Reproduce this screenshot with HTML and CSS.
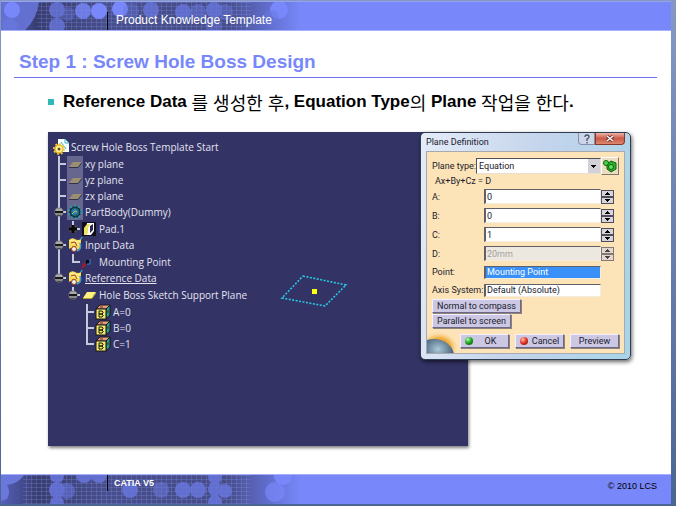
FILE: index.html
```html
<!DOCTYPE html>
<html lang="ko">
<head>
    <meta charset="UTF-8">
    <meta name="viewport" content="width=device-width, initial-scale=1.0">
    <title>Product Knowledge Template</title>
    <link rel="stylesheet" href="styles.css">
</head>
<body>
    <!-- shared icon shapes -->
    <svg class="defs" width="0" height="0" aria-hidden="true">
        <defs>
            <linearGradient id="fade" x1="0" y1="0" x2="1" y2="0">
                <stop offset="0" stop-color="#5560b8"/>
                <stop offset="0.12" stop-color="#383d70"/>
                <stop offset="0.35" stop-color="#474e8c"/>
                <stop offset="0.75" stop-color="#454c88"/>
                <stop offset="0.88" stop-color="#5f6bc8"/>
                <stop offset="1" stop-color="#7888fa"/>
            </linearGradient>
            <pattern id="mesh" width="5" height="4" patternUnits="userSpaceOnUse">
                <path d="M0 .5H5M.5 0V4" stroke="#8c98e8" stroke-opacity=".25" fill="none"/>
            </pattern>
            <symbol id="i-plane" viewBox="0 0 16 16">
                <rect width="16" height="16" fill="#66668f"/>
                <path d="M2 11L6 6H15L11 11Z" fill="#9a9070"/>
                <path d="M2 11.5H11L15 6.5" stroke="#303050" fill="none"/>
            </symbol>
            <symbol id="i-set" viewBox="0 0 16 16">
                <path d="M2 3Q5 0 8 2T14 2V11Q10 14 7 12T2 12Z" fill="#f8dc50"/>
                <path d="M3 4Q6 2 8 4T13 4M4 7Q7 5 12 8" stroke="#fff8c8" fill="none"/>
                <path d="M4 6L8 5 10 9M5 10H9" stroke="#b83018" fill="none"/>
                <path d="M10 14Q15 12 13 6M14 2L15 0" stroke="#38a0d8" stroke-width="1.5" fill="none"/>
                <circle cx="7" cy="12" r="2.5" fill="#f0f0f0" stroke="#a04020"/>
            </symbol>
            <symbol id="i-param" viewBox="0 0 16 16">
                <path d="M1 5L5 1H15L11 5Z" fill="#e0a080" stroke="#181818"/>
                <path d="M11 5L15 1V11L11 15Z" fill="#20a090" stroke="#181818"/>
                <rect x="1" y="5" width="10" height="10" fill="#f0e868" stroke="#181818"/>
                <path d="M4 7H7L8 8V9L7 10H4ZM4 10H7L8 11V12L7 13H4Z" fill="none" stroke="#181818"/>
                <path d="M5 3H8M13 6V9" stroke="#782010"/>
            </symbol>
            <symbol id="i-minus" viewBox="0 0 10 10">
                <circle cx="5" cy="5" r="4.5" fill="#8a8a8a"/>
                <path d="M2 8A4.5 4.5 0 0 0 8 8Z" fill="#444"/>
                <rect x="1" y="4" width="8" height="2" fill="#181818"/>
                <path d="M2 3H8" stroke="#c8c8c8"/>
            </symbol>
            <radialGradient id="orb" cx=".6" cy=".3" r=".8">
                <stop offset="0" stop-color="#a8c8d8"/>
                <stop offset=".5" stop-color="#486078"/>
                <stop offset="1" stop-color="#182838"/>
            </radialGradient>
            <radialGradient id="glow">
                <stop offset="0" stop-color="#e88800"/>
                <stop offset=".6" stop-color="#f0b040"/>
                <stop offset="1" stop-color="#fce4b8" stop-opacity="0"/>
            </radialGradient>
        </defs>
    </svg>

    <div class="slide">
        <header class="band band-top">
            <svg class="band-art" width="300" height="30" viewBox="0 0 300 30" aria-hidden="true">
                <rect width="300" height="30" fill="url(#fade)"/>
                <rect x="36" width="214" height="30" fill="url(#mesh)"/>
                <path d="M0 0H38Q36 18 22 30H0Z" fill="#6470d0"/>
                <g fill="#7888fa">
                    <circle cx="11" cy="8" r="8"/>
                    <circle cx="82" cy="9" r="8" opacity=".8"/>
                    <circle cx="98" cy="9" r="8"/>
                    <circle cx="119" cy="7" r="8"/>
                    <circle cx="278" cy="8" r="9"/>
                </g>
                <g fill="#6876dc" opacity=".8">
                    <circle cx="9" cy="24" r="8"/>
                    <circle cx="56" cy="8" r="8"/>
                    <circle cx="56" cy="24" r="8"/>
                    <circle cx="67" cy="12" r="7" opacity=".5"/>
                    <circle cx="130" cy="9" r="8" opacity=".5"/>
                    <circle cx="150" cy="8" r="8"/>
                    <circle cx="182" cy="10" r="8"/>
                    <circle cx="197" cy="10" r="8" opacity=".7"/>
                    <circle cx="213" cy="8" r="8"/>
                    <circle cx="213" cy="24" r="8" opacity=".6"/>
                    <circle cx="224" cy="10" r="8" opacity=".6"/>
                    <circle cx="270" cy="16" r="8" opacity=".6"/>
                </g>
            </svg>
            <p class="band-title">Product Knowledge Template</p>
        </header>

        <main class="content">
            <h1>Step 1 : Screw Hole Boss Design</h1>
            <ul class="bullets">
                <li>Reference Data <span class="ko">를 생성한 후</span>, Equation Type<span class="ko">의</span> Plane <span class="ko">작업을 한다</span>.</li>
            </ul>

            <div class="stage">
                <section class="canvas">
                    <div class="tree">
                        <div class="row">
                            <svg class="icon" viewBox="0 0 16 16">
                                <path d="M5 0H12L16 4V13H5Z" fill="#f8ffff"/>
                                <path d="M12 0V4H16M8 3L13 10" stroke="#30b0c8" fill="none"/>
                                <circle cx="6" cy="10" r="4" fill="#fff0a0" stroke="#e8b820" stroke-width="1.5"/>
                                <circle cx="6" cy="10" r="5.2" fill="none" stroke="#f0c830" stroke-width="1.5" stroke-dasharray="2 2"/>
                                <circle cx="6" cy="10" r="1.5" fill="#704818"/>
                            </svg>
                            <span>Screw Hole Boss Template Start</span>
                        </div>
                        <ul>
                            <li><div class="row"><i class="slot"></i><svg class="icon"><use href="#i-plane"/></svg><span>xy plane</span></div></li>
                            <li><div class="row"><i class="slot"></i><svg class="icon"><use href="#i-plane"/></svg><span>yz plane</span></div></li>
                            <li><div class="row"><i class="slot"></i><svg class="icon"><use href="#i-plane"/></svg><span>zx plane</span></div></li>
                            <li>
                                <div class="row">
                                    <i class="slot"><svg class="knob"><use href="#i-minus"/></svg></i>
                                    <svg class="icon" viewBox="0 0 16 16">
                                        <rect width="16" height="16" fill="#66668f"/>
                                        <circle cx="8" cy="8" r="5" fill="#207070" stroke="#103048" stroke-width="2"/>
                                        <circle cx="8" cy="8" r="6.3" fill="none" stroke="#3098a8" stroke-width="2" stroke-dasharray="2 2"/>
                                        <path d="M5 6L9 5 11 9 7 11Z" fill="#3878c8"/>
                                        <path d="M5 10L8 7 10 8" stroke="#a8c860" fill="none"/>
                                    </svg>
                                    <span>PartBody(Dummy)</span>
                                </div>
                                <ul>
                                    <li><div class="row">
                                        <i class="slot"><svg class="knob" viewBox="0 0 10 10"><circle cx="5" cy="5" r="4" fill="#555"/><path d="M5 1V9M1 5H9" stroke="#080808" stroke-width="3"/></svg></i>
                                        <svg class="icon" viewBox="0 0 16 16">
                                            <rect x="1" y="1" width="14" height="14" fill="#101018"/>
                                            <path d="M6 2H13V10L10 14H3L6 10Z" fill="#fff"/>
                                            <path d="M3 7L6 3H9L7 7V12L5 14H3Z" fill="#f0e060"/>
                                            <path d="M9 5L12 3V9L9 12Z" fill="#282850"/>
                                        </svg>
                                        <span>Pad.1</span>
                                    </div></li>
                                </ul>
                            </li>
                            <li>
                                <div class="row"><i class="slot"><svg class="knob"><use href="#i-minus"/></svg></i><svg class="icon"><use href="#i-set"/></svg><span>Input Data</span></div>
                                <ul>
                                    <li><div class="row">
                                        <i class="slot"></i>
                                        <svg class="icon" viewBox="0 0 16 16">
                                            <path d="M0 15L2 11 0 12 4 8 5 12Z" fill="#a01830"/>
                                            <rect x="5" y="6" width="4" height="4" fill="#080810"/>
                                            <path d="M9 5V10H6" stroke="#3888e8" fill="none"/>
                                        </svg>
                                        <span>Mounting Point</span>
                                    </div></li>
                                </ul>
                            </li>
                            <li>
                                <div class="row"><i class="slot"><svg class="knob"><use href="#i-minus"/></svg></i><svg class="icon"><use href="#i-set"/></svg><span class="active">Reference Data</span></div>
                                <ul>
                                    <li>
                                        <div class="row">
                                            <i class="slot"><svg class="knob"><use href="#i-minus"/></svg></i>
                                            <svg class="icon" viewBox="0 0 16 16"><path d="M2 11L6 5H15L11 11Z" fill="#fff080"/><path d="M2 11.5H11L15 6" stroke="#b0a030" fill="none"/></svg>
                                            <span>Hole Boss Sketch Support Plane</span>
                                        </div>
                                        <ul>
                                            <li><div class="row"><i class="slot"></i><svg class="icon"><use href="#i-param"/></svg><span>A=0</span></div></li>
                                            <li><div class="row"><i class="slot"></i><svg class="icon"><use href="#i-param"/></svg><span>B=0</span></div></li>
                                            <li><div class="row"><i class="slot"></i><svg class="icon"><use href="#i-param"/></svg><span>C=1</span></div></li>
                                        </ul>
                                    </li>
                                </ul>
                            </li>
                        </ul>
                    </div>
                    <svg class="plane" width="70" height="36" viewBox="0 0 70 36">
                        <path d="M24 3L67 12 46 33 3 25Z" fill="none" stroke="#28c8e0" stroke-width="1.6" stroke-dasharray="2 1.5"/>
                        <rect x="33" y="16" width="5" height="5" fill="#ffff10"/>
                    </svg>
                </section>

                <form class="dialog">
                    <div class="titlebar">
                        <h2>Plane Definition</h2>
                        <button type="button" class="win-btn help" aria-label="Help">
                            <svg width="8" height="10" viewBox="0 0 8 10"><path d="M2 3Q2 1 4 1T6 3Q6 4 4 5V7M4 8V9.5" fill="none" stroke="#44506a" stroke-width="1.3"/></svg>
                        </button>
                        <button type="button" class="win-btn close" aria-label="Close">
                            <svg width="8" height="7" viewBox="0 0 8 7"><path d="M1 1L7 6M7 1L1 6" stroke="#6a2828" stroke-width="3"/><path d="M1 1L7 6M7 1L1 6" stroke="#fff" stroke-width="1.5"/></svg>
                        </button>
                    </div>
                    <div class="panel">
                        <svg class="orb" width="32" height="22" viewBox="0 0 32 22" aria-hidden="true">
                            <ellipse cx="12" cy="17" rx="20" ry="17" fill="url(#glow)"/>
                            <ellipse cx="7" cy="25" rx="20" ry="17" fill="url(#orb)"/>
                        </svg>
                        <div class="type-row">
                            <label for="type">Plane type:</label>
                            <select id="type"><option>Equation</option></select>
                            <button type="button" class="tool" aria-label="Catalog">
                                <svg width="15" height="14" viewBox="0 0 15 14">
                                    <path d="M5 5L9 2L14 4V10L9 13L5 10Z" fill="#28b028" stroke="#106010"/>
                                    <circle cx="4" cy="4" r="2.5" fill="#50d050" stroke="#106010"/>
                                    <circle cx="9" cy="8" r="2.5" fill="#60e060" stroke="#106010"/>
                                </svg>
                            </button>
                        </div>
                        <p class="formula">Ax+By+Cz = D</p>
                        <div class="field"><label for="a">A:</label><input id="a" type="text" value="0"><span class="spin"><button type="button" aria-label="Increase A"></button><button type="button" aria-label="Decrease A"></button></span></div>
                        <div class="field"><label for="b">B:</label><input id="b" type="text" value="0"><span class="spin"><button type="button" aria-label="Increase B"></button><button type="button" aria-label="Decrease B"></button></span></div>
                        <div class="field"><label for="c">C:</label><input id="c" type="text" value="1"><span class="spin"><button type="button" aria-label="Increase C"></button><button type="button" aria-label="Decrease C"></button></span></div>
                        <div class="field"><label for="d">D:</label><input id="d" type="text" value="20mm" disabled><span class="spin off"><button type="button" aria-label="Increase D" disabled></button><button type="button" aria-label="Decrease D" disabled></button></span></div>
                        <div class="field plain"><label for="point">Point:</label><input id="point" class="selected" type="text" value="Mounting Point"></div>
                        <div class="field plain"><label for="axis">Axis System:</label><input id="axis" type="text" value="Default (Absolute)"></div>
                        <div class="stack">
                            <button type="button" class="btn">Normal to compass</button>
                            <button type="button" class="btn">Parallel to screen</button>
                        </div>
                        <div class="actions">
                            <button type="button" class="btn"><i class="dot green"></i><span>OK</span></button>
                            <button type="button" class="btn"><i class="dot red"></i><span>Cancel</span></button>
                            <button type="button" class="btn"><span>Preview</span></button>
                        </div>
                    </div>
                </form>
            </div>
        </main>

        <footer class="band band-bottom">
            <svg class="band-art" width="300" height="30" viewBox="0 0 300 30" aria-hidden="true">
                <rect width="300" height="30" fill="url(#fade)"/>
                <rect x="22" width="228" height="30" fill="url(#mesh)"/>
                <path d="M0 0H23Q18 8 6 10Q10 16 6 24L0 26Z" fill="#6a78dc"/>
                <g fill="#6876dc" opacity=".85">
                    <circle cx="56" cy="1" r="7"/>
                    <circle cx="56" cy="15" r="8"/>
                    <circle cx="56" cy="28" r="7"/>
                    <circle cx="66" cy="16" r="8" opacity=".7"/>
                    <circle cx="83" cy="0" r="8"/>
                    <circle cx="98" cy="0" r="8"/>
                    <circle cx="129" cy="15" r="8"/>
                    <circle cx="160" cy="15" r="8" opacity=".7"/>
                    <circle cx="182" cy="15" r="8"/>
                    <circle cx="197" cy="15" r="8"/>
                    <circle cx="214" cy="2" r="7"/>
                    <circle cx="214" cy="14" r="7"/>
                    <circle cx="214" cy="27" r="7"/>
                    <circle cx="224" cy="16" r="7"/>
                </g>
                <g fill="#7888fa">
                    <circle cx="282" cy="1" r="9"/>
                    <circle cx="274" cy="17" r="10" opacity=".7"/>
                </g>
            </svg>
            <p class="product">CATIA V5</p>
            <p class="copyright">© 2010 LCS</p>
        </footer>
    </div>
</body>
</html>
```
FILE: styles.css
```css
* {
    box-sizing: border-box;
}
body {
    margin: 0;
    min-height: 100vh;
    display: flex;
    padding: 1px 5px 2px 1px;
    background: linear-gradient(#8798c4, #4a6496);
    font-family: "Liberation Sans", "Noto Sans CJK KR", sans-serif;
}
h1, h2, p, ul {
    margin: 0;
    padding: 0;
}
ul {
    list-style: none;
}
svg {
    display: block;
    flex: none;
}
.defs {
    position: absolute;
}
.slide {
    flex: 1;
    display: flex;
    flex-direction: column;
    background: #fff;
}

/* top and bottom bands */
.band {
    position: relative;
    display: flex;
    height: 30px;
    overflow: hidden;
    background: #7888fa;
}
.band-art {
    position: absolute;
    left: 0;
    top: 0;
}
.band-top {
    align-items: flex-end;
    border-top: 1px solid #95a2ee;
    border-bottom: 1px solid #a5affa;
}
.band-bottom {
    justify-content: space-between;
    align-items: flex-start;
    border-top: 1px solid #a5affa;
}
.band-title, .product {
    position: relative;
    margin-left: 106px;
    border-left: 1px solid #000;
    color: #fff;
}
.band-title {
    padding: 0 0 2px 8px;
    font-size: 12px;
    line-height: 16px;
}
.product {
    padding-left: 6px;
    font-size: 9px;
    line-height: 16px;
    font-weight: bold;
}
.copyright {
    padding: 3px 14px 0 0;
    font-size: 9px;
    line-height: 16px;
}

/* slide body */
.content {
    flex: 1;
}
h1 {
    margin: 17px 14px 0 13px;
    padding: 0 5px 1px;
    border-bottom: 1px solid #7070e8;
    color: #7888fa;
    font-size: 19px;
    line-height: 28px;
}
.bullets {
    margin: 12px 14px 18px 47px;
    font-size: 17px;
    font-weight: bold;
    line-height: 24px;
}
.bullets li {
    display: flex;
    align-items: center;
    white-space: pre;
}
.bullets li::before {
    content: "";
    width: 6px;
    height: 6px;
    margin-right: 9px;
    background: #30b8b8;
}
.ko {
    font-family: "Noto Sans CJK KR", sans-serif;
    font-size: 18px;
    font-weight: normal;
}
.stage {
    position: relative;
    margin: 0 40px 0 47px;
}
.canvas {
    position: relative;
    width: 72%;
    padding: 7px 5px 94px;
    background: #333366;
    box-shadow: 1px 2px 3px rgba(0, 0, 0, 0.5);
}
.plane {
    position: absolute;
    left: 55%;
    top: 45%;
}

/* specification tree */
.tree {
    color: #e4e4f0;
    font-family: "Open Sans", "Noto Sans", sans-serif;
    font-size: 10px;
    line-height: 16px;
}
.tree ul {
    padding-top: 1px;
}
.tree ul ul {
    margin-left: 14px;
}
.tree li {
    background: linear-gradient(#c8c8dc, #c8c8dc) 5px 0 / 2px 100% no-repeat;
}
.tree li:last-child {
    background-size: 2px 8px;
}
.row {
    display: flex;
    align-items: center;
    height: 16px;
    white-space: nowrap;
}
.icon {
    width: 16px;
    height: 16px;
    margin-right: 2px;
}
.slot {
    width: 14px;
    height: 16px;
    padding: 3px 0 0 1px;
    background: linear-gradient(#c8c8dc, #c8c8dc) 5px 7px / 8px 2px no-repeat;
}
.knob {
    width: 10px;
    height: 10px;
}
.active {
    text-decoration: underline;
}

/* Plane Definition dialog */
.dialog {
    position: absolute;
    top: 0;
    right: 0;
    width: 211px;
    padding: 0 5px 5px;
    border: 1px solid #303c50;
    border-radius: 5px;
    background: linear-gradient(100deg, #e4ecf8, #c4d4ec 50%, #a8d4e8);
    box-shadow: 1px 2px 4px rgba(0, 0, 0, 0.6);
    color: #20202c;
    font-family: Roboto, "Noto Sans", sans-serif;
    font-size: 9px;
}
.dialog button, .dialog input, .dialog select {
    margin: 0;
    padding: 0;
    border-radius: 0;
    font: inherit;
    color: inherit;
}
.titlebar {
    display: flex;
    align-items: flex-start;
    height: 18px;
}
.titlebar h2 {
    flex: 1;
    font-size: 9px;
    font-weight: normal;
    line-height: 18px;
}
.win-btn {
    display: flex;
    align-items: center;
    justify-content: center;
    height: 12px;
    border: 1px solid #8490a8;
    border-top: none;
}
.dialog .help {
    width: 17px;
    background: #ccd6e8;
    border-bottom-left-radius: 4px;
}
.dialog .close {
    width: 30px;
    border-color: #883828;
    border-bottom-right-radius: 4px;
    background: linear-gradient(#ecb4a8, #cc5848 50%, #dc8870);
}
.panel {
    position: relative;
    padding: 5px 5px 5px;
    border: 1px solid #a8a8b0;
    background: #fce4b8;
}
.orb {
    position: absolute;
    left: 0;
    bottom: 0;
}
.type-row {
    display: flex;
    align-items: center;
    height: 18px;
}
.type-row label {
    width: 44px;
    white-space: nowrap;
}
.dialog select {
    flex: 1;
    height: 16px;
    padding: 0 2px;
    appearance: none;
    border: 1px solid #e8e0d0;
    border-top-color: #505058;
    border-left-color: #505058;
    background:
        linear-gradient(#000, #000) right 4px top 6px / 5px 1px no-repeat,
        linear-gradient(#000, #000) right 5px top 7px / 3px 1px no-repeat,
        linear-gradient(#000, #000) right 6px top 8px / 1px 1px no-repeat,
        linear-gradient(#d4d0d8, #d4d0d8) right / 12px 100% no-repeat,
        #fff;
}
.tool {
    width: 18px;
    height: 18px;
    border: 1px solid #807868;
    border-top-color: #fff;
    border-left-color: #fff;
    background: #ecdcc0;
}
.formula {
    padding-left: 3px;
    line-height: 12px;
}
.field {
    display: flex;
    align-items: center;
    height: 19px;
    padding-right: 5px;
}
.field label {
    width: 52px;
    white-space: nowrap;
}
.field input {
    flex: 1;
    min-width: 0;
    height: 15px;
    border: 1px solid #f4ecdc;
    border-top-color: #606068;
    border-left: 2px solid #606068;
}
.dialog .field input {
    padding: 0 1px;
}
.dialog .field input:disabled {
    background: #ece8e0;
    color: #a0a0a0;
}
.field.plain {
    height: 18px;
    padding-right: 18px;
}
.field.plain input {
    height: 13px;
}
.dialog .field .selected {
    background: #3890f8;
    color: #fff;
}
.spin {
    display: flex;
    flex-direction: column;
    width: 13px;
}
.spin button {
    height: 7px;
    border: 1px solid #504c58;
    background:
        linear-gradient(#000, #000) center 1px / 1px 1px no-repeat,
        linear-gradient(#000, #000) center 2px / 3px 1px no-repeat,
        linear-gradient(#000, #000) center 3px / 5px 1px no-repeat,
        #d8d4dc;
}
.spin button + button {
    background:
        linear-gradient(#000, #000) center 1px / 5px 1px no-repeat,
        linear-gradient(#000, #000) center 2px / 3px 1px no-repeat,
        linear-gradient(#000, #000) center 3px / 1px 1px no-repeat,
        #d8d4dc;
}
.spin.off {
    opacity: 0.7;
}
.btn {
    display: flex;
    align-items: center;
    justify-content: center;
    height: 14px;
    border: 1px solid #6c6888;
    border-top-color: #f4f0ff;
    border-left-color: #f4f0ff;
    background: #ccc8e4;
    box-shadow: 1px 1px 0 #8c8478;
    white-space: nowrap;
}
.stack {
    display: flex;
    flex-direction: column;
    align-items: flex-start;
    gap: 1px;
}
.dialog .stack .btn {
    padding: 0 4px;
}
.actions {
    position: relative;
    display: flex;
    justify-content: flex-end;
    gap: 6px;
    margin-top: 6px;
}
.actions .btn {
    width: 49px;
}
.actions .btn span {
    flex: 1;
    text-align: center;
}
.dot {
    width: 8px;
    height: 8px;
    margin-left: 4px;
    border-radius: 50%;
}
.green {
    background: radial-gradient(circle at 35% 30%, #b0ffb0, #18a018 50%, #085008);
}
.red {
    background: radial-gradient(circle at 35% 30%, #ffc0b0, #e03020 50%, #701008);
}
```
